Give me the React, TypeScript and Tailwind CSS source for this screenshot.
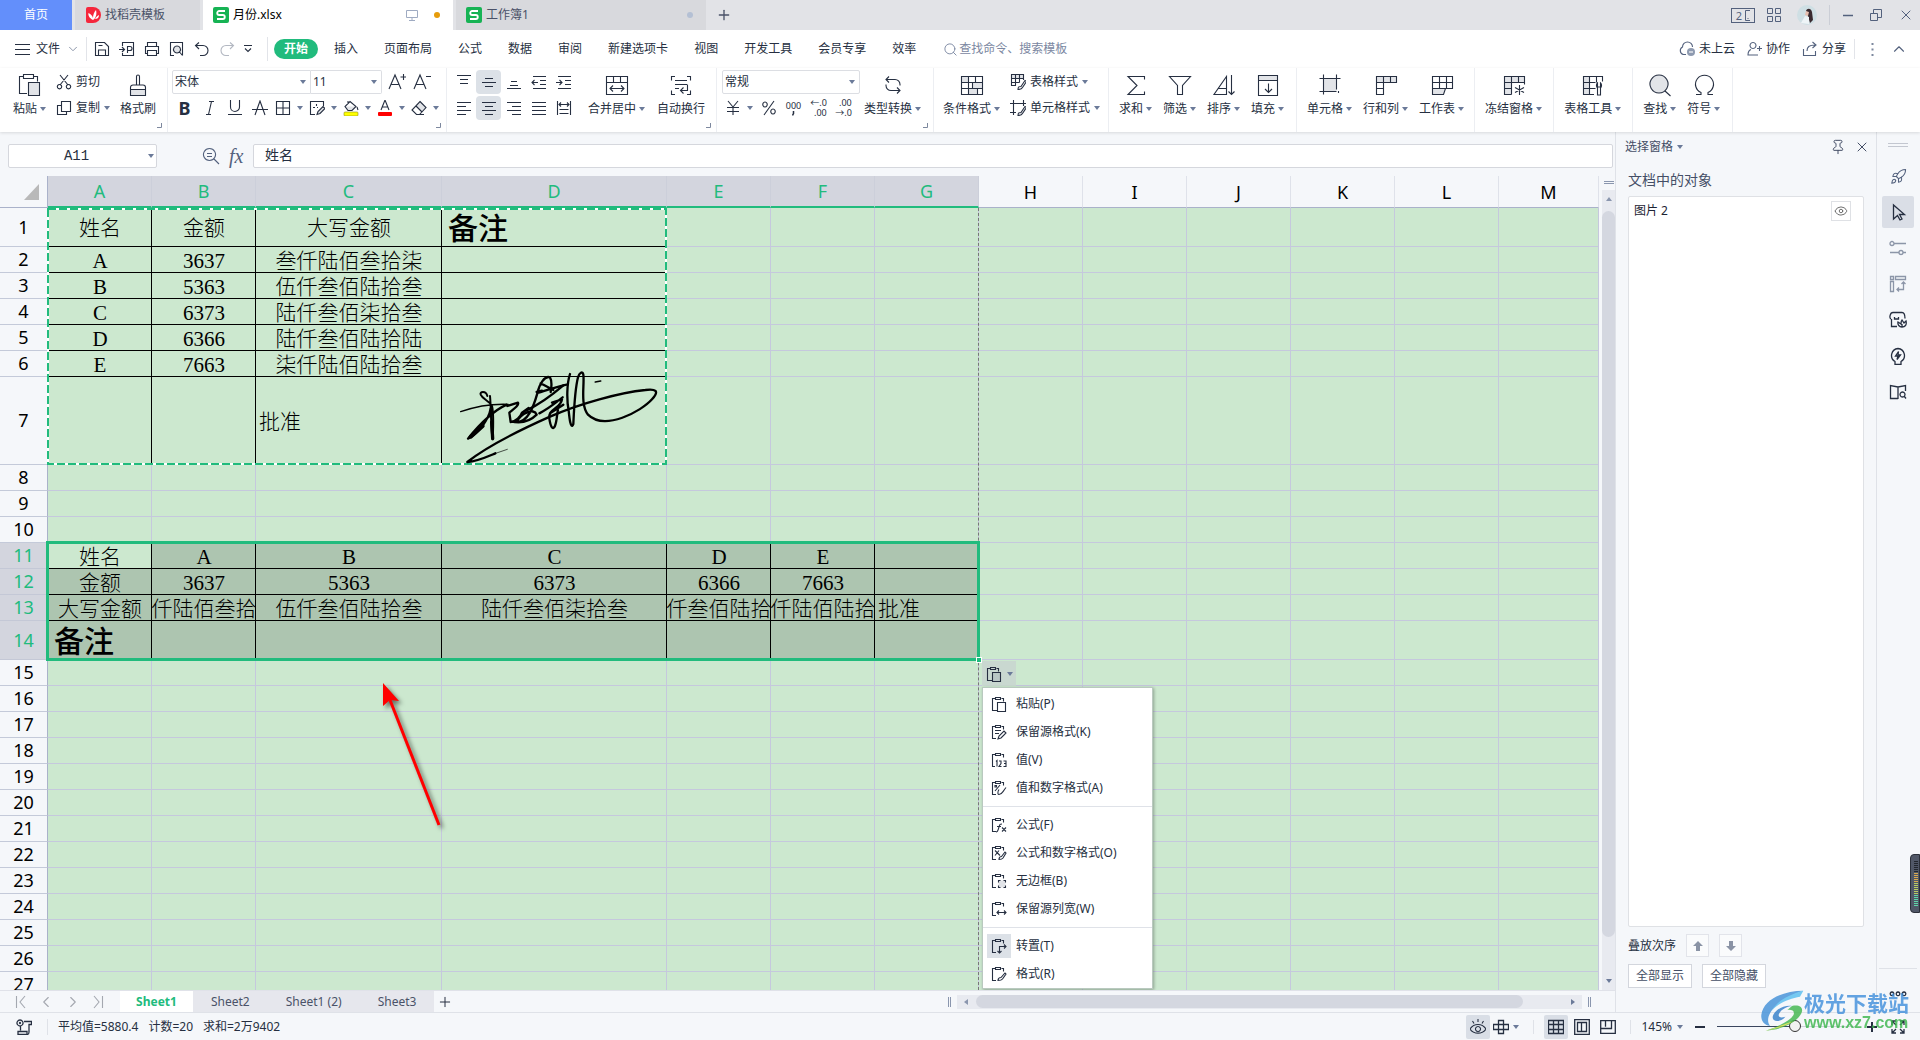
import type { ReactNode } from 'react';
import { ChevronDown, ChevronLeft, ChevronRight, ChevronUp, Eye, Pin, Plus, Rocket, Search, X } from 'lucide-react';

/* ---------- icons ---------- */

interface IcoProps {
  d: string;
  w?: number;
  h?: number;
  shade?: string;
  sw?: number;
  className?: string;
  children?: ReactNode;
}

// d is stroked, shade is filled light grey below it
function Ico({ d, w = 16, h = 16, shade, sw = 1.1, className = 'text-[#262f41]', children }: IcoProps) {
  return (
    <svg
      width={w}
      height={h}
      viewBox={`0 0 ${w} ${h}`}
      fill="none"
      stroke="currentColor"
      strokeWidth={sw}
      className={`shrink-0 ${className}`}
      aria-hidden="true"
    >
      {shade && <path d={shade} fill="#8b95a5" fillOpacity="0.25" stroke="none" />}
      <path d={d} />
      {children}
    </svg>
  );
}

function Caret() {
  return (
    <svg width="6" height="4" viewBox="0 0 6 4" className="shrink-0" aria-hidden="true">
      <path d="M0 0h6L3 4z" fill="#6b7a99" />
    </svg>
  );
}

function SheetLogo() {
  return (
    <svg width="16" height="16" viewBox="0 0 16 16" className="shrink-0" aria-hidden="true">
      <rect width="16" height="16" rx="2" fill="#16b354" />
      <path d="M12 4H6.2a2 2 0 0 0 0 4h3.6a2 2 0 0 1 0 4H4" fill="none" stroke="#fff" strokeWidth="1.8" />
    </svg>
  );
}

const CLIP = 'M4.5 2.5H1.5v12H5M10.5 2.5H12.5v3M4.5 1.500h5v2h-5z';

const ICON = {
  paste: 'M5.5 3.5h-4v17H9M15.5 3.5h4v5M5.5 1.5h10v4h-10zM10.5 9.5h11v13h-11z',
  brush: 'M10.5 12V3.5a1.5 1.5 0 0 1 3 0V12M4.5 22.5v-8a2.5 2.5 0 0 1 2.5-2.5h10a2.5 2.5 0 0 1 2.5 2.5v8zM4.5 16.500h15',
  merge: 'M1.5 3.5h21v18h-21zM1.5 9.5h21M8.5 3.5v6M15.5 3.5v6M5 15.5h14M8 12.5l-3 3 3 3M16 12.5l3 3-3 3',
  wrap: 'M6 3.5H2.5v4M18 3.5h3.5v4M2.5 17.5v4H6M21.5 17.5v4H18M6 7.5h12M6 11.5h12M6 15.5h4M18.500 11.5v6h-7M14.5 14.5l-3 3 3 3',
  convert: 'M8 3.500L5 6.500l3 3M5 6.500h9a5 5 0 0 1 5 5v1M16 20.500l3-3-3-3M19 17.500h-9a5 5 0 0 1-5-5v-1',
  cond: 'M1.5 3.5h21v18h-21zM1.5 9.5h21M1.500 15.500h21M8.500 3.500v18M15.500 3.500v6M12.500 9.500v6M17.500 15.500v6',
  sum: 'M20.500 6.500V3.500H4l9 9-9 9h16.500v-3',
  filter: 'M1.500 3.500h21L14.500 12.500v9h-5v-9z',
  sort: 'M14.500 21.500V3.500L2 21.500zM6 15.500h8.500M19.500 2v19M16.500 18.500l3 3 3-3',
  fill: 'M2.500 2.500h19v20h-19zM2.500 7.500h19M12.500 10.500v9M9 16l3.500 3.500 3.500-3.500',
  cell: 'M5.500 1.500v20M18.500 1.500v15M1.500 5.500h21M1.500 18.500h17M20.500 18v2',
  rowcol: 'M2.500 3.500h20v6h-13v12h-7zM9.500 3.500v6M16.500 3.500v6M2.500 9.500h7M2.500 15.500h7',
  sheet: 'M2.500 3.500h20v12h-20zM2.500 9.500h20M9.500 3.500v12M16.500 3.500v12M2.500 15.500v6h11l2-6',
  freeze: 'M9.500 21.500h-7v-18h20v8M2.500 9.500h20M2.500 15.500h7M9.500 3.500v18M16.500 3.500v6M17.500 12v10M13 14.500l9 5M22 14.500l-9 5',
  tool: 'M13 21.500H2.500v-18h19v5M2.500 9.500h12M2.500 15.500h12M8.500 3.500v18M15.500 3.500v6M16.500 22v-7a3.500 3.500 0 0 1 0-5v4h3v-4a3.500 3.500 0 0 1 0 5v7z',
  find: 'M11 2a9 9 0 1 0 .01 0zM17 18l5.500 5',
  symbol: 'M4 21.500h5v-2a9 9 0 1 1 7 0v2h5',
};

/* ---------- ribbon pieces ---------- */

function Big({ d, shade, label, caret = true }: { d: string; shade?: string; label: string; caret?: boolean }) {
  return (
    <button className="flex flex-col items-center pt-[5px]">
      <Ico d={d} shade={shade} w={24} h={24} />
      <span className="mt-1 flex items-center gap-[3px] leading-4">
        {label}
        {caret && <Caret />}
      </span>
    </button>
  );
}

function Tool({ label, children, on, caret }: { label: string; children: ReactNode; on?: boolean; caret?: boolean }) {
  return (
    <button
      aria-label={label}
      className={`flex h-6 shrink-0 items-center justify-center gap-[6px] ${caret ? 'w-[34px]' : 'w-[25px]'} ${on ? 'rounded-sm bg-[#dce1e7]' : ''}`}
    >
      {children}
      {caret && <Caret />}
    </button>
  );
}

function Group({ children, className, corner }: { children: ReactNode; className: string; corner?: boolean }) {
  return (
    <div className={`relative flex h-full shrink-0 border-r border-[#eceef2] ${className}`}>
      {children}
      {corner && (
        <svg width="5" height="5" className="absolute right-[5px] bottom-[4px]" aria-hidden="true">
          <path d="M4.500 0v4.500H0" fill="none" stroke="#7d889e" />
        </svg>
      )}
    </div>
  );
}

function Picker({ label, value, className }: { label: string; value: string; className: string }) {
  return (
    <label className={`flex h-6 items-center border border-[#dcdee3] pr-1 pl-[2px] ${className}`}>
      <select aria-label={label} className="min-w-0 flex-1 appearance-none bg-transparent outline-none">
        <option>{value}</option>
      </select>
      <Caret />
    </label>
  );
}

/* ---------- top bars ---------- */

function TitleBar() {
  return (
    <header className="flex h-[30px] shrink-0 gap-[3px] bg-[#e2e3e7] text-[#4a5268]">
      <button className="w-[72px] bg-[#638ffb] text-white">首页</button>
      <button className="flex w-[125px] items-center gap-1 bg-[#d8d9dd] pl-[11px]">
        <svg width="15" height="16" viewBox="0 0 15 16" aria-hidden="true">
          <path d="M0 2a2 2 0 0 1 2-2h5a8 8 0 0 1 0 16H2a2 2 0 0 1-2-2z" fill="#f5273c" />
          <path d="M7 13C3 11 2 8 2.500 6 5 7 6.500 9 7 11c0-3 1-6 3-8 1 4 0 8-3 10zM9 12c1-2 2-3 4-4 0 3-2 4-4 4z" fill="#fff" />
        </svg>
        找稻壳模板
      </button>
      <button className="flex w-[250px] items-center gap-1 bg-white pr-[13px] pl-[10px] text-black">
        <SheetLogo />
        <span className="flex-1 text-left">月份.xlsx</span>
        <Ico w={12} h={12} d="M.5 1.500h11v7H.5zM6 8.500v3M3 11.500h6" sw={1} className="text-[#9fabc2]" />
        <span className="ml-3 size-[6px] rounded-full bg-[#e69c0b]" />
      </button>
      <button className="flex w-[250px] items-center gap-1 bg-[#d8d9dd] pr-[13px] pl-[10px]">
        <SheetLogo />
        <span className="flex-1 text-left">工作簿1</span>
        <span className="size-[6px] rounded-full bg-[#b4c0d4]" />
      </button>
      <button aria-label="新建" className="ml-[7px] self-center">
        <Plus size={16} strokeWidth={2} />
      </button>
      <div className="ml-auto flex items-center gap-3 pr-[6px] text-[#53617d]">
        <span className="flex h-[15px] w-6 items-center justify-center border border-current text-[11px] leading-none">
          2
          <Ico w={6} h={11} d="M6 .5H1.500v10H6M4 8v1" sw={1} className="ml-[2px]" />
        </span>
        <Ico w={14} h={14} d="M.5.5h5v5h-5zM8.500.5h5v5h-5zM.5 8.500h5v5h-5zM8.500 8.500h5v5h-5z" sw={1} className="text-[#53617d]" />
        <svg width="20" height="20" viewBox="0 0 20 20" className="ml-1" aria-hidden="true">
          <circle cx="10" cy="10" r="10" fill="#cfdfe4" />
          <path d="M9 6c1-3 5-3 6 1l1 8-3 3-2-7z" fill="#3a2a30" />
          <path d="M9 6l3 1-1 4-3-1z" fill="#e8bfb0" />
          <path d="M4 18l4-7 4 1v7z" fill="#eef4f7" />
        </svg>
        <span className="h-5 w-px bg-[#cbced6]" />
        <Ico w={12} h={12} d="M1 6.500h10" sw={1.5} className="text-[#53617d]" />
        <Ico w={12} h={12} d="M.5 4.500h7v7h-7zM3.500 4.500v-4h8v8h-4" sw={1} className="ml-1 text-[#53617d]" />
        <X size={16} strokeWidth={1.5} className="ml-1" />
      </div>
    </header>
  );
}

const MENU = ['插入', '页面布局', '公式', '数据', '审阅', '新建选项卡', '视图', '开发工具', '会员专享', '效率'];

function MenuBar() {
  return (
    <nav className="flex h-[38px] shrink-0 items-center bg-white">
      <button className="flex items-center gap-[6px] pl-[15px]">
        <Ico w={15} h={12} d="M0 1.500h15M0 6.500h15M0 11.500h15" />
        文件
        <ChevronDown size={14} strokeWidth={1.5} className="text-[#7d889e]" />
      </button>
      <span className="mr-[7px] ml-[6px] h-6 w-px bg-[#e2e4e9]" />
      <div className="flex w-[173px] items-center gap-[9px]">
        <Ico d="M1.500 1.500h9l4 4v9h-13zM4.500 14v-5h7v5M4.500 4.500h4" />
        <Ico d="M3.500 5V1.500h11v13h-11V12M0 8.500h5M3 6l2.500 2.500L3 11M8.500 12V5.500h2.500a2 2 0 0 1 0 4H9" />
        <Ico d="M3.500 5V1.500h9V5M3.500 12.500h-2V5.500h13v7h-2M3.500 9.500h9v5h-9z" />
        <Ico d="M5 14.500H1.500v-13h12v13M8 5a3.500 3.500 0 1 0 .01 0zM10.500 11l3 3.500" shade="M8 5a3.500 3.500 0 1 0 .01 0z" />
        <Ico d="M5 1.500l-3.500 3L5 8M1.500 4.500H9a4.800 4.800 0 0 1 0 10H6" />
        <Ico d="M11 1.500l3.500 3L11 8M14.500 4.500H7a4.800 4.800 0 0 0 0 10h3" className="text-[#b3b8c2]" />
        <Ico w={8} h={8} d="M0 .5h8M1 3.500l3 3 3-3" />
      </div>
      <span className="h-6 w-px bg-[#e2e4e9]" />
      <button className="mr-[3px] ml-[6px] h-5 rounded-full bg-[#21bb7d] px-[10px] font-bold text-white">开始</button>
      {MENU.map((m) => (
        <button key={m} className="px-[13px]">
          {m}
        </button>
      ))}
      <label className="ml-[14px] flex items-center gap-[1px] text-[#7b87a1]">
        <Search size={15} strokeWidth={1.5} />
        <input placeholder="查找命令、搜索模板" className="w-40 outline-none placeholder:text-[#7b87a1]" />
      </label>
      <div className="ml-auto flex items-center gap-3 pr-3">
        <button className="flex items-center gap-1">
          <Ico d="M7 13.500H4.500a4 4 0 0 1-1-7.500 5 5 0 0 1 10 0" className="text-[#53617d]">
            <circle cx="12" cy="11" r="4" fill="#8e9ab0" stroke="none" />
            <path d="M10 11h4" stroke="#fff" />
          </Ico>
          未上云
        </button>
        <button className="flex items-center gap-1">
          <Ico w={15} d="M6 1.500a3 3 0 1 0 .01 0zM4 8.500c-3 1-3 3-3 5.500h10M10 7.500h5M12.500 5v5" className="text-[#53617d]" />
          协作
        </button>
        <button className="flex items-center gap-1">
          <Ico d="M1.500 8v6.500h12V10M5 10c0-4 2-6 8-6M10.500 1l3.500 3-3.500 3" className="text-[#53617d]" />
          分享
        </button>
        <span className="-ml-1 h-5 w-px bg-[#e2e4e9]" />
        <Ico w={3} h={13} d="M1.500 0v2M1.500 5.500v2M1.500 11v2" sw={2} className="ml-1 text-[#7d889e]" />
        <ChevronUp size={18} strokeWidth={1.5} className="ml-1 text-[#53617d]" />
      </div>
    </nav>
  );
}

const ALIGN = [
  ['顶端对齐', 'M1 1.500h14M4 5.500h8M4 9.500h8', false],
  ['垂直居中', 'M4 4.500h8M1 8.500h14M4 12.500h8', true],
  ['底端对齐', 'M5 7.500h6M4 11.500h8M1 14.500h14', false],
  ['减少缩进', 'M2 2.500h13M9 6.500h6M9 10.500h6M2 14.500h13M7 8.500H1M3.500 6L1 8.500 3.500 11', false],
  ['增加缩进', 'M2 2.500h13M9 6.500h6M9 10.500h6M2 14.500h13M0 8.500h6M3.500 6L6 8.500 3.500 11', false],
  ['左对齐', 'M1 2.500h14M1 6.500h9M1 10.500h14M1 14.500h9', false],
  ['水平居中', 'M1 2.500h14M4 6.500h8M1 10.500h14M4 14.500h8', true],
  ['右对齐', 'M1 2.500h14M6 6.500h9M1 10.500h14M6 14.500h9', false],
  ['两端对齐', 'M1 2.500h14M1 6.500h14M1 10.500h14M1 14.500h14', false],
  ['分散对齐', 'M1.500 1v14M14.500 1v14M3 4.500h10M5 2.500l-2 2 2 2M11 2.500l2 2-2 2M3.500 9.500h9M3.500 13.500h9', false],
] as const;

// two stacked lines of tiny digits
function Digits({ top, bottom }: { top: string; bottom: string }) {
  return (
    <span className="flex flex-col items-end text-[9px] leading-[10px]">
      <span>{top}</span>
      <span>{bottom}</span>
    </span>
  );
}

function Ribbon() {
  return (
    <div className="relative z-10 flex h-16 shrink-0 bg-white shadow-[0_1px_3px_rgba(0,0,0,0.12)]">
      <Group className="w-[168px] pl-[13px]" corner>
        <Big d={ICON.paste} shade="M10.500 9.500h11v13h-11z" label="粘贴" />
        <div className="mt-[2px] ml-[10px] flex w-[64px] flex-col gap-[2px]">
          <button className="flex h-6 items-center gap-1">
            <Ico d="M4 1l8 10M12 1L4 11M3.500 10.500a2.200 2.200 0 1 0 .01 0zM12.500 10.500a2.200 2.200 0 1 0 .01 0z" />
            剪切
          </button>
          <button className="flex h-6 items-center gap-1">
            <Ico d="M5.500 1.500h9v10h-9zM5.500 5.500h-4v9h9v-3" />
            复制
            <Caret />
          </button>
        </div>
        <Big d={ICON.brush} shade="M4.500 16.500h15v6h-15z" label="格式刷" caret={false} />
      </Group>

      <Group className="w-[279px] flex-col gap-[2px] pt-[2px] pl-1" corner>
        <div className="flex">
          <Picker label="字体" value="宋体" className="w-[139px] rounded-l-xs" />
          <Picker label="字号" value="11" className="w-[71px] rounded-r-xs border-l-0" />
          <span className="w-[2px]" />
          <Tool label="增大字号">
            <Ico w={18} h={18} d="M1 16L7 2l6 14M3.500 11.500h7M15.500 1v6M12.500 4h6" />
          </Tool>
          <Tool label="减小字号">
            <Ico w={18} h={18} d="M1 16L7 2l6 14M3.500 11.500h7M13 3.500h5" />
          </Tool>
        </div>
        <div className="flex">
          <Tool label="加粗">
            <span className="text-lg font-bold">B</span>
          </Tool>
          <Tool label="倾斜">
            <Ico d="M7 1.500h5M4 14.500h5M9.500 1.500l-3 13" />
          </Tool>
          <Tool label="下划线">
            <Ico d="M3.500 0v7a4.500 4.500 0 0 0 9 0V0M1 14.500h14" />
          </Tool>
          <Tool label="删除线">
            <Ico d="M3 15L8 1l5 14M0 9.500h16" />
          </Tool>
          <Tool label="边框" caret>
            <Ico d="M1.500 1.500h13v13h-13zM8 1.500v13M1.500 8h13" />
          </Tool>
          <Tool label="绘图边框" caret>
            <Ico
              d="M6 14.500H1.500v-13h13V6M7.500 4v2M4 7.500h2M8 7.500h1M8 14.500l1-3 5-5 2 2-5 5z"
              shade="M8 14.500l1-3 5-5 2 2-5 5z"
            />
          </Tool>
          <Tool label="填充颜色" caret>
            <Ico d="M7 1.500l6 5-4 4H5l-3-4zM5 4V1M14 7l1 3" shade="M2 6.500h11l-4 4H5z">
              <rect x="1" y="12" width="14" height="4" rx="1" fill="#ffff00" stroke="#8e8e20" strokeWidth="0.6" />
            </Ico>
          </Tool>
          <Tool label="字体颜色" caret>
            <Ico d="M4 10L8 0l4 10M5.500 7h5">
              <rect x="1" y="12" width="14" height="4" rx="1" fill="#ff0000" stroke="none" />
            </Ico>
          </Tool>
          <Tool label="清除" caret>
            <Ico d="M9 1.500l6 6-6.500 7h-3L1 10zM5 6l6 6M8 14.500h5" shade="M9 1.500l6 6-4 4.500-6-6z" />
          </Tool>
        </div>
      </Group>

      <Group className="w-[270px] pl-1" corner>
        <div className="mr-3 grid grid-cols-5 content-start gap-y-[2px] pt-[2px]">
          {ALIGN.map(([label, d, on]) => (
            <Tool key={label} label={label} on={on}>
              <Ico d={d} />
            </Tool>
          ))}
        </div>
        <Big d={ICON.merge} label="合并居中" />
        <span className="w-3" />
        <Big d={ICON.wrap} label="自动换行" caret={false} />
      </Group>

      <Group className="w-[217px] pl-[5px]" corner>
        <div className="flex flex-col gap-[2px] pt-[2px]">
          <Picker label="数字格式" value="常规" className="w-[138px] rounded-xs" />
          <div className="flex">
            <Tool label="货币" caret>
              <Ico d="M3 1l5 6 5-6M8 7v8M2 7.500h12M2 11.500h12" />
            </Tool>
            <Tool label="百分比">
              <Ico d="M13 1L3 15M4 2a2.200 2.500 0 1 0 .01 0zM12 9a2.200 2.500 0 1 0 .01 0z" />
            </Tool>
            <Tool label="千位分隔">
              <span className="flex flex-col items-center text-[9px] leading-[10px]">
                <span>000</span>
                <Ico w={3} h={5} d="M1.500 0v2.500L.5 4.500" sw={1.500} />
              </span>
            </Tool>
            <Tool label="增加小数位">
              <Digits top="←.0" bottom=".00" />
            </Tool>
            <Tool label="减少小数位">
              <Digits top=".00" bottom="→.0" />
            </Tool>
          </div>
        </div>
        <span className="w-1" />
        <Big d={ICON.convert} label="类型转换" />
      </Group>

      <Group className="w-[175px] gap-[10px] pl-[9px]">
        <Big d={ICON.cond} shade="M1.500 3.500h7v6h-7zM12 9.500h10.500v6H12zM8.500 15.500H17v6H8.500z" label="条件格式" />
        <div className="flex flex-col gap-[2px] pt-[2px]">
          <button className="flex h-6 items-center gap-1">
            <Ico
              d="M6 11.500H1.500v-11h12V6M1.500 4.500h12M1.500 8.500h8M5.500.5v11M9.500.5v8M8 15.500c0-3 1-3 3-3l4-6 1.500 1-4 6c-1 2-2 2-4.500 2z"
              shade="M1.500.5h12v3.500h-12z"
            />
            表格样式
            <Caret />
          </button>
          <button className="flex h-6 items-center gap-1">
            <Ico
              d="M3.500 0v15M0 3.500h16M0 12.500h6M13.500 0v6M8 15.500c0-3 1-3 3-3l4-6 1.500 1-4 6c-1 2-2 2-4.500 2z"
              shade="M8 15.500c0-3 1-3 3-3l4-6 1.500 1-4 6z"
            />
            单元格样式
            <Caret />
          </button>
        </div>
      </Group>

      <Group className="gap-[11px] pr-3 pl-[10px]">
        <Big d={ICON.sum} label="求和" />
        <Big d={ICON.filter} label="筛选" />
        <Big d={ICON.sort} label="排序" />
        <Big d={ICON.fill} shade="M2.500 2.500h19v5h-19z" label="填充" />
      </Group>
      <Group className="gap-[11px] pr-[10px] pl-[10px]">
        <Big d={ICON.cell} shade="M5.500 5.500h13v13h-13z" label="单元格" />
        <Big d={ICON.rowcol} shade="M2.500 3.500h20v6h-20z" label="行和列" />
        <Big d={ICON.sheet} shade="M2.500 15.500h13l-2 6h-11z" label="工作表" />
      </Group>
      <Group className="pr-[11px] pl-[10px]">
        <Big d={ICON.freeze} shade="M2.500 3.500h20v6h-13v12h-7z" label="冻结窗格" />
      </Group>
      <Group className="pr-[11px] pl-[10px]">
        <Big d={ICON.tool} shade="M2.500 3.500h6v18h-6z" label="表格工具" />
      </Group>
      <Group className="gap-[11px] pr-[12px] pl-[10px]">
        <Big d={ICON.find} shade="M11 2a9 9 0 1 0 .01 0z" label="查找" />
        <Big d={ICON.symbol} label="符号" />
      </Group>
    </div>
  );
}

/* ---------- sheet ---------- */

const COLS = ['A', 'B', 'C', 'D', 'E', 'F', 'G', 'H', 'I', 'J', 'K', 'L', 'M'];

const CELLS: Record<number, string[]> = {
  1: ['姓名', '金额', '大写金额', '备注'],
  2: ['A', '3637', '叁仟陆佰叁拾柒'],
  3: ['B', '5363', '伍仟叁佰陆拾叁'],
  4: ['C', '6373', '陆仟叁佰柒拾叁'],
  5: ['D', '6366', '陆仟叁佰陆拾陆'],
  6: ['E', '7663', '柒仟陆佰陆拾叁'],
  7: ['', '', '批准'],
  11: ['姓名', 'A', 'B', 'C', 'D', 'E'],
  12: ['金额', '3637', '5363', '6373', '6366', '7663'],
  13: ['大写金额', '叁仟陆佰叁拾柒', '伍仟叁佰陆拾叁', '陆仟叁佰柒拾叁', '陆仟叁佰陆拾陆', '柒仟陆佰陆拾叁', '批准'],
  14: ['备注'],
};

const ROWS = Array.from({ length: 27 }, (_, i) => i + 1);

function colWidth(c: string) {
  if (c === 'C') return 'w-[186px]';
  if (c === 'D') return 'w-[225px]';
  if (c === 'M') return 'w-[100px]';
  return 'w-[104px]';
}

function rowHeight(r: number) {
  if (r === 1 || r === 14) return 'h-[38px]';
  if (r === 7) return 'h-[87px]';
  return 'h-[25px]';
}

function cellAlign(text: string) {
  if (text === '批准') return 'justify-start pl-[3px]';
  if (text === '备注') return 'justify-start pl-[6px] text-[30px] font-medium';
  return 'justify-center pl-px';
}

function Cell({ row, col }: { row: number; col: number }) {
  const text = CELLS[row]?.[col] ?? '';
  const selected = row >= 11 && row <= 14 && col <= 6;
  const framed = selected || (row <= 7 && col <= 3);
  const bg = selected && !(row === 11 && col === 0) ? 'bg-[#adc5b0]' : '';
  const line = framed ? 'border-black' : 'border-[#c5c8dd]';
  return (
    <td className={`border-r border-b p-0 ${line} ${bg}`}>
      <div className={`flex items-center overflow-hidden pt-[3px] leading-none whitespace-nowrap ${rowHeight(row)} ${cellAlign(text)}`}>
        {text}
      </div>
    </td>
  );
}

const PASTE_MENU = [
  [
    { label: '粘贴(P)', d: 'M4.500 2.500H1.500v12H6M10.500 2.500H12.500v3M4.500 1.500h5v2h-5zM6.500 6.500h8v9h-8z' },
    { label: '保留源格式(K)', d: CLIP + 'M4 6.500h6M4 9.500h4M7 15l1-3 5-5 2 2-5 5z' },
    { label: '值(V)', d: 'M4.500 2.500H1.500v12H4M10.500 2.500H12.500v3M4.500 1.500h5v2h-5zM5 9.500l1-1v6M8 9h2v2.500l-2 3h2.500M12.500 9H15v5.500h-2.500M13 11.500h2' },
    { label: '值和数字格式(A)', d: CLIP + 'M9 5l-5 6M4 5.500h1.500v1.500H4zM8 9.500c-2 3-1 5 0 5 3 0 3-2 7-7' },
  ],
  [
    { label: '公式(F)', d: CLIP + 'M5 15c2 0 2-2 3-5s1-3 3-3M6 9.500h4M11 10.500l4 4M15 10.500l-4 4' },
    { label: '公式和数字格式(O)', d: CLIP + 'M4 5.500l5 5M8 5.500l-4 5M8 14.500c0-2 1-3 2.500-3L14 7l1 1-3 5c-1 1.500-2 1.500-4 1.500z' },
    { label: '无边框(B)', d: CLIP + 'M7.500 9.500v-2h2M12.500 7.500h2v2M7.500 12.500v2h2M12.500 14.500h2v-2', shade: 'M7.500 7.500h7v7h-7z' },
    { label: '保留源列宽(W)', d: CLIP + 'M6 11.500h9M8 9.500l-2 2 2 2M13 9.500l2 2-2 2' },
  ],
  [
    { label: '转置(T)', d: CLIP + 'M8.500 15V8.500H15M13 6.500l2 2-2 2M6.500 13l2 2 2-2', on: true },
    { label: '格式(R)', d: CLIP + 'M7 14.500c0-2 1-3 3-3L14 7l1 1-3.500 5c-1 1.500-2.500 1.500-4.500 1.500z' },
  ],
];

function PasteMenu() {
  return (
    <div className="absolute top-[511px] left-[982px] w-[171px] border border-[#b9c9bf] bg-white pt-[2px] shadow-[1px_1px_3px_rgba(0,0,0,0.3)]" role="menu">
      {PASTE_MENU.map((group, i) => (
        <div key={i} className={i ? 'mt-1 border-t border-[#dfe2e8] pt-1' : ''}>
          {group.map((item) => (
            <button key={item.label} role="menuitem" className="flex h-7 w-full items-center gap-[5px] pl-1">
              <span className={`flex size-6 items-center justify-center ${'on' in item ? 'bg-[#dce1e7]' : ''}`}>
                <Ico d={item.d} shade={'shade' in item ? item.shade : undefined} />
              </span>
              {item.label}
            </button>
          ))}
        </div>
      ))}
    </div>
  );
}

function Signature() {
  return (
    <svg width="240" height="110" viewBox="0 0 720 330" className="absolute top-[184px] left-[440px]" fill="none" stroke="#000" strokeWidth="7" strokeLinecap="round" strokeLinejoin="round" aria-label="签名">
      <path d="M62 155c40-14 95-24 143-22" strokeWidth="4" />
      <path d="M142 108c-4-16-24-14-20-4 6 14 24 16 34 34 6 24 4 60 2 100-6-30-4-90-8-130" strokeWidth="6" />
      <path d="M200 134c-44 20-82 60-116 102 30-16 62-56 68-90" />
      <path d="M92 230l36-32" strokeWidth="12" />
      <path d="M158 236l-3-50" strokeWidth="10" />
      <path d="M202 138l32-10c4 8-14 20-26 30l4 28c16-2 30-16 34-28l20-14M212 184c26 6 56 2 78-20-8-22-48-4-60 22 34 0 50-44 62-86 6-28 22-54 38-48 8 14 4 28 2 44M296 98c26-8 56-18 84-24M302 70l38 20M290 96l16-4" />
      <path d="M258 152c30-14 70-40 112-76M298 160c28-14 44-28 70-48M336 128l30-10c-4 28-44 30-38 58 4 26 10 34 16 24 8-18 6-38 10-50M330 160l40-26" />
      <path d="M390 42c-10 30-10 80-4 110 2 20 6 60 14 40 2-40 4-100 14-140 4-14 14-20 16-8 4 30-10 90 14 120 50 50 160-10 192-46 24-26 10-32-20-28C540 98 420 130 330 170S140 260 82 306c30-2 60-16 84-26" />
      <path d="M164 281l38-13" strokeWidth="2" />
      <path d="M466 66l16-3" strokeWidth="5" />
    </svg>
  );
}

function Sheet() {
  return (
    <div className="relative min-h-0 flex-1 overflow-hidden">
      <table className="w-[1598px] table-fixed border-separate border-spacing-0 bg-[#cce8cf] font-light text-black">
        <colgroup>
          <col className="w-12" />
          {COLS.map((c) => (
            <col key={c} className={colWidth(c)} />
          ))}
        </colgroup>
        <thead className="text-lg leading-none">
          <tr className="h-8">
            <th className="border-r border-b border-[#aab2ca] bg-[#f5f7fa] p-0">
              <Ico w={15} h={16} d="" className="ml-6 text-[#b9b9b9]">
                <path d="M15 0v16H0z" fill="#b9b9b9" stroke="none" />
              </Ico>
            </th>
            {COLS.map((c, i) => (
              <th
                key={c}
                scope="col"
                className={
                  i < 7
                    ? 'border-r border-b-2 border-r-[#cccfda] border-b-[#21bb7d] bg-[#d3d5de] p-0 font-normal text-[#21bb7d]'
                    : 'border-r border-b border-r-[#dfe2ea] border-b-[#aab2ca] bg-[#f5f7fa] p-0 font-normal'
                }
              >
                {c}
              </th>
            ))}
          </tr>
        </thead>
        <tbody className="font-['Liberation_Serif','Noto_Sans_CJK_SC',serif] text-[21px]">
          {ROWS.map((r) => (
            <tr key={r}>
              <th
                scope="row"
                className={`border-r border-b border-r-[#aab2ca] p-0 pb-px font-['Noto_Sans','Noto_Sans_CJK_SC',sans-serif] text-lg leading-none font-normal ${
                  r >= 11 && r <= 14 ? 'border-b-[#c4c8d6] bg-[#d3d5de] text-[#21bb7d]' : 'border-b-[#c4cad9] bg-[#f5f7fa]'
                }`}
              >
                {r}
              </th>
              {COLS.map((c, i) => (
                <Cell key={c} row={r} col={i} />
              ))}
            </tr>
          ))}
        </tbody>
      </table>

      {/* page break */}
      <div className="absolute top-8 bottom-0 left-[978px] border-l border-dashed border-[#777]" />

      {/* copied range */}
      <svg width="620" height="260" className="absolute top-[31px] left-[47px]" fill="none" strokeWidth="2" aria-hidden="true">
        <rect x="1" y="2" width="618" height="255" stroke="#fff" />
        <rect x="1" y="2" width="618" height="255" stroke="#21bb7d" strokeDasharray="8 3" />
      </svg>
      <Signature />

      {/* active selection */}
      <div className="absolute top-[365px] left-[46px] h-[120px] w-[934px] border-[3px] border-[#21bb7d]" />
      <div className="absolute top-[481px] left-[976px] size-[6px] border border-white bg-[#21bb7d]" />

      <svg width="80" height="160" className="absolute top-[500px] left-[370px] drop-shadow-[3px_3px_2px_rgba(0,0,0,0.5)]" aria-hidden="true">
        <path d="M20 24L69 149" stroke="#f00" strokeWidth="3" />
        <path d="M13 7l16 18-9-1-7 6z" fill="#f00" />
      </svg>

      <button aria-label="粘贴选项" className="absolute top-[485px] left-[982px] flex h-[25px] w-[34px] items-center justify-center gap-[5px] bg-[#c9d8d0]">
        <Ico d={PASTE_MENU[0][0].d} shade="M6.500 6.500h8v9h-8z" />
        <Caret />
      </button>
      <PasteMenu />
    </div>
  );
}

function FormulaBar() {
  return (
    <div className="flex h-11 shrink-0 items-start pt-3 pr-[2px] pl-2">
      <label className="flex h-6 w-[149px] items-center rounded-xs border border-[#d5d7dd] bg-white pr-[2px]">
        <input
          aria-label="名称框"
          defaultValue="A11"
          className="min-w-0 flex-1 pr-1 text-center font-['Liberation_Mono','Noto_Sans_CJK_SC',monospace] text-sm outline-none"
        />
        <Caret />
      </label>
      <Ico w={18} h={18} d="M7.500 1.500a6 6 0 1 0 .01 0zM12 12l5 5M5 6.500h5M5 9.500h5" className="mt-[3px] ml-[45px] text-[#53617d]" />
      <span className="ml-[9px] w-[24px] font-['Liberation_Serif',serif] text-xl leading-6 text-[#53617d] italic">fx</span>
      <input
        aria-label="编辑栏"
        defaultValue="姓名"
        className="h-6 min-w-0 flex-1 rounded-xs border border-[#d5d7dd] bg-white pb-1 pl-[11px] text-sm outline-none"
      />
    </div>
  );
}

function VerticalScroll() {
  return (
    <div className="flex w-[13px] shrink-0 flex-col items-center">
      <span className="mt-[5px] mb-[6px] h-[3px] w-[10px] border-y border-[#8a96ae]" />
      <div className="flex w-full flex-1 flex-col items-center bg-[#e8eaf0]">
        <Ico w={6} h={4} d="" className="mt-[7px] mb-[10px]">
          <path d="M0 4h6L3 0z" fill="#8a96ae" stroke="none" />
        </Ico>
        <div className="w-full flex-1 rounded-full bg-[#d4d7e0]" />
        <span className="mt-[42px] mb-[7px] flex">
          <Caret />
        </span>
      </div>
    </div>
  );
}

function SheetTabs() {
  return (
    <div className="flex h-[22px] shrink-0 border-t border-[#e0e2e9]">
      <div className="flex w-[120px] items-center justify-between pr-[16px] pl-[15px] text-[#a4a8b0]">
        <Ico w={12} h={14} d="M1.500 1v12M10 1L5 7l5 6" className="text-[#a4a8b0]" />
        <ChevronLeft size={18} strokeWidth={1.5} />
        <ChevronRight size={18} strokeWidth={1.5} />
        <Ico w={12} h={14} d="M10.500 1v12M2 1l5 6-5 6" className="text-[#a4a8b0]" />
      </div>
      <button className="w-[73px] bg-white font-bold text-[#21bb7d]">Sheet1</button>
      {['Sheet2', 'Sheet1 (2)', 'Sheet3'].map((s) => (
        <button key={s} className="bg-[#e6e7ed] px-[18px] text-[#4a5268]">
          {s}
        </button>
      ))}
      <button aria-label="新建工作表" className="ml-[3px] self-center">
        <Plus size={16} strokeWidth={1.5} />
      </button>
      <div className="ml-auto flex w-[667px] items-center gap-[6px]">
        <span className="h-[10px] w-[3px] border-x border-[#8a96ae]" />
        <div className="flex h-[14px] flex-1 items-center bg-[#e8eaf0] px-[7px]">
          <Ico w={4} h={6} d="" className="mr-2">
            <path d="M4 0v6L0 3z" fill="#8a96ae" stroke="none" />
          </Ico>
          <div className="h-[13px] flex-1 rounded-full bg-[#d4d7e0]" />
          <Ico w={4} h={6} d="" className="ml-[48px]">
            <path d="M0 0v6l4-3z" fill="#6b7a99" stroke="none" />
          </Ico>
        </div>
        <span className="mr-6 h-[10px] w-[3px] border-x border-[#8a96ae]" />
      </div>
    </div>
  );
}

/* ---------- right side ---------- */

function SelectionPane() {
  return (
    <aside className="flex w-[262px] shrink-0 flex-col border-x border-[#dfe2e8] pr-3 pl-3 text-[#444e66]">
      <div className="-ml-[3px] flex h-[30px] items-center gap-1">
        选择窗格
        <Caret />
        <Pin size={16} strokeWidth={1.5} className="ml-auto" />
        <X size={16} strokeWidth={1.5} className="-mr-[6px] ml-1" />
      </div>
      <h2 className="mt-[6px] text-sm leading-6">文档中的对象</h2>
      <ul className="mt-1 flex-1 rounded-xs border border-[#dfe1e5] bg-white">
        <li className="flex h-[28px] items-center justify-between pr-3 pl-[5px] text-[#1c2333]">
          图片 2
          <button aria-label="显示或隐藏" className="flex size-5 items-center justify-center border border-[#dfe1e5] text-[#666]">
            <Eye size={14} strokeWidth={1.6} />
          </button>
        </li>
      </ul>
      <div className="mt-[7px] flex items-center text-[#262f41]">
        叠放次序
        <button aria-label="上移" className="ml-[10px] flex size-[23px] items-center justify-center border border-[#e2e4ea] bg-[#fafbfc]">
          <Ico w={10} h={10} d="">
            <path d="M5 0l5 5H7v5H3V5H0z" fill="#8a93a5" stroke="none" />
          </Ico>
        </button>
        <button aria-label="下移" className="ml-[10px] flex size-[23px] items-center justify-center border border-[#e2e4ea] bg-[#fafbfc]">
          <Ico w={10} h={10} d="">
            <path d="M5 10l5-5H7V0H3v5H0z" fill="#8a93a5" stroke="none" />
          </Ico>
        </button>
      </div>
      <div className="mt-[7px] mb-6 flex gap-[10px]">
        <button className="h-6 w-16 border border-[#d3d6dd] bg-white">全部显示</button>
        <button className="h-6 w-16 border border-[#d3d6dd] bg-white">全部隐藏</button>
      </div>
    </aside>
  );
}

const SIDE = [
  ['属性', 'M1 4.500a2 2 0 1 0 4 0 2 2 0 1 0-4 0M5 4.500h12M1 13.500h9M10 13.500a2 2 0 1 0 4 0 2 2 0 1 0-4 0M14 13.500h3', 'text-[#8c96a8]'],
  ['分析', 'M1.500 1.500h3v3h-3zM6.500 1.500h10v3h-10zM1.500 6.500h3v10h-3zM14.500 7v7.500H8M12.500 9l2-2 2 2M10 12.500l-2 2 2 2', 'text-[#8c96a8]'],
  ['素材', 'M2.500 8v7.500H8M2 8C0 7 1 1.500 4 1.500h9c3 0 3 3 3 6M5.500 6v2h4V6M13 16a4 4 0 0 1-4-5l3 2c0-3 1-4 1-4l2 3 2-2c1 4-1 6-4 6zM13 16v-3', 'text-[#262f41]'],
  ['技巧', 'M9 1.500a7 7 0 0 0-3 13v3h6v-3a7 7 0 0 0-3-13zM9.500 4.500l-3 4.500H9l-1 3.500L11.500 8H9z', 'text-[#262f41]'],
  ['帮助', 'M9 15.500H1.500v-13L9 4l7.500-1.500V8M9 4v12M13.500 9a2.500 2.500 0 1 0 .01 0zM15 13l2 2.500', 'text-[#262f41]'],
] as const;

function SideBar() {
  return (
    <aside className="flex w-[43px] shrink-0 flex-col items-center gap-1 pr-px">
      <span className="mt-[11px] mb-[9px] h-1 w-5 border-y border-[#c3c7d0]" />
      <button aria-label="快捷" className="flex size-8 items-center justify-center text-[#53617d]">
        <Rocket size={17} strokeWidth={1.5} />
      </button>
      <button aria-label="选择" className="flex size-8 items-center justify-center rounded-xs bg-[#dadee6]">
        <Ico w={18} h={18} d="M4.500 2v14l4-3.500 2.500 4.500 2-1-2.500-4.500h5z" sw={1.3} />
      </button>
      {SIDE.map(([label, d, color]) => (
        <button key={label} aria-label={label} className="flex size-8 items-center justify-center">
          <Ico w={18} h={18} d={d} sw={1.3} className={color} />
        </button>
      ))}
      <div className="mt-auto mb-3 flex h-8 w-[38px] justify-center border-t border-[#dfe2e8] pt-[21px]">
        <Ico w={18} h={8} d="M3 2a1.800 1.800 0 1 0 .01 0zM9 2a1.800 1.800 0 1 0 .01 0zM15 2a1.800 1.800 0 1 0 .01 0z" sw={1.3} />
      </div>
    </aside>
  );
}

function StatusBar() {
  return (
    <footer className="flex h-7 shrink-0 items-center border-t border-[#dfe2e8] pr-[15px] pl-4">
      <Ico d="M4 1a3 3 0 1 0 .01 0zM4 3.500a.5.5 0 1 0 .01 0M8 2.500h7.500v3H13v8M4.500 7.500v4M2 12.500h9v3H2zM11 15.500c2 0 2-1 2-3" sw={1.3} />
      <span className="mx-[10px] ml-[15px] h-4 w-px bg-[#dfe2e8]" />
      <p className="flex gap-[10px]">
        <span>平均值=5880.4</span>
        <span>计数=20</span>
        <span>求和=2万9402</span>
      </p>
      <div className="ml-auto flex items-center">
        <button aria-label="护眼模式" className="flex size-6 items-center justify-center rounded-xs bg-[#d9dee6]">
          <Ico d="M0 10c4-6 12-6 16 0-4 5.500-12 5.500-16 0zM8 7.500a2.500 2.500 0 1 0 .01 0zM8 0v3M2.500 2l1.500 2.500M13.500 2L12 4.500" />
        </button>
        <button aria-label="阅读模式" className="mr-[14px] ml-[3px] flex items-center gap-1">
          <Ico d="M5.500 1.500h5v13h-5zM.5 5.500h15v5H.5z" sw={1.3} />
          <Caret />
        </button>
        <span className="h-[14px] w-px bg-[#dfe2e8]" />
        <button aria-label="普通视图" className="ml-[10px] flex size-6 items-center justify-center rounded-xs bg-[#d9dee6]">
          <Ico d="M.5 1.500h15v13H.5zM.5 5.500h15M.5 10.500h15M5.500 1.500v13M10.500 1.500v13" sw={1.3} />
        </button>
        <button aria-label="分页预览" className="ml-[6px]">
          <Ico d="M.7.7h14.600v14.600H.7zM3.500 3.500h4v9h-4zM7.500 3.500h5v9h-5z" sw={1.3} />
        </button>
        <button aria-label="页面布局" className="ml-[10px]">
          <Ico d="M.7 1.700h14.600v12.600H.7zM5.500 1.700v6M.7 9.500h10.800V1.700" sw={1.3} />
        </button>
        <span className="ml-[14px] h-[14px] w-px bg-[#dfe2e8]" />
        <button className="ml-[10px] flex items-center gap-[5px]">
          145%
          <Caret />
        </button>
        <Ico w={10} h={10} d="M0 5h10" sw={2} className="ml-3 text-[#262f41]" />
        <input
          type="range"
          aria-label="缩放"
          min={0}
          max={100}
          defaultValue={57}
          className="mx-3 h-3 w-[138px] appearance-none bg-transparent [&::-webkit-slider-runnable-track]:h-px [&::-webkit-slider-runnable-track]:bg-linear-to-r [&::-webkit-slider-runnable-track]:from-[#3a465e] [&::-webkit-slider-runnable-track]:from-55% [&::-webkit-slider-runnable-track]:to-[#cfd3db] [&::-webkit-slider-runnable-track]:to-55% [&::-webkit-slider-thumb]:-mt-[6px] [&::-webkit-slider-thumb]:size-3 [&::-webkit-slider-thumb]:appearance-none [&::-webkit-slider-thumb]:rounded-full [&::-webkit-slider-thumb]:border [&::-webkit-slider-thumb]:border-[#333] [&::-webkit-slider-thumb]:bg-[#f2f2f2]"
        />
        <Ico w={10} h={10} d="M0 5h10M5 0v10" sw={2} />
        <Ico w={14} h={14} d="M1 5V1h4M9 1h4v4M13 9v4H9M5 13H1V9M1 1l4 4M13 1L9 5M13 13L9 9M1 13l4-4" sw={1.3} className="ml-[14px] text-[#262f41]" />
      </div>
    </footer>
  );
}

function Watermark() {
  return (
    <div className="pointer-events-none absolute right-[11px] bottom-2 flex items-center opacity-80">
      <svg width="44" height="42" viewBox="0 0 132 126" aria-hidden="true">
        <path d="M130 2C70 2 10 28 4 74c-2 20 10 32 26 34C12 84 34 36 130 2z" fill="#3f8fd8" />
        <path d="M130 2C84 14 50 34 36 62 60 34 92 26 120 20z" fill="#55bdf0" />
        <path d="M96 48c30-6 40 12 20 34-22 24-60 38-98 40 40-14 72-30 82-46 6-12-4-18-18-16z" fill="#3db54a" />
        <path d="M16 122c30-4 60-14 84-28-20 6-50 18-84 28z" fill="#d8dc3c" />
        <path d="M96 48C70 44 40 62 38 82c0 16 26 14 38-2-16 6-24 0-18-10 6-12 22-20 38-22z" fill="#2f7cc9" />
      </svg>
      <div className="flex flex-col leading-none">
        <span className="text-[21px] leading-6 font-bold text-[#3e8edb]">极光下载站</span>
        <span className="font-['Liberation_Sans',sans-serif] text-base leading-4 font-bold text-[#39b54a]">www.xz7.com</span>
      </div>
    </div>
  );
}

const LEVELS = [
  ...Array(6).fill('bg-[#22262e]'),
  ...Array(5).fill('bg-[#d9a94e]'),
  ...Array(6).fill('bg-[#b9cc62]'),
  ...Array(6).fill('bg-[#5fd6a8]'),
];

function LevelMeter() {
  return (
    <div className="absolute top-[854px] right-0 flex h-[59px] w-[10px] flex-col gap-px rounded-l-sm border border-[#2c303a] bg-[#505767] px-[3px] pt-[6px]">
      {LEVELS.map((c, i) => (
        <span key={i} className={`h-px w-1 shrink-0 ${c}`} />
      ))}
    </div>
  );
}

export default function App() {
  return (
    <div className="relative flex h-screen flex-col overflow-hidden bg-[#f5f7fa] font-['Noto_Sans','Noto_Sans_CJK_SC',sans-serif] text-xs whitespace-nowrap text-[#262f41]">
      <TitleBar />
      <MenuBar />
      <Ribbon />
      <div className="flex min-h-0 flex-1">
        <main className="flex min-w-0 flex-1 flex-col">
          <FormulaBar />
          <div className="flex min-h-0 flex-1">
            <Sheet />
            <VerticalScroll />
          </div>
          <SheetTabs />
        </main>
        <SelectionPane />
        <SideBar />
      </div>
      <StatusBar />
      <Watermark />
      <LevelMeter />
    </div>
  );
}
